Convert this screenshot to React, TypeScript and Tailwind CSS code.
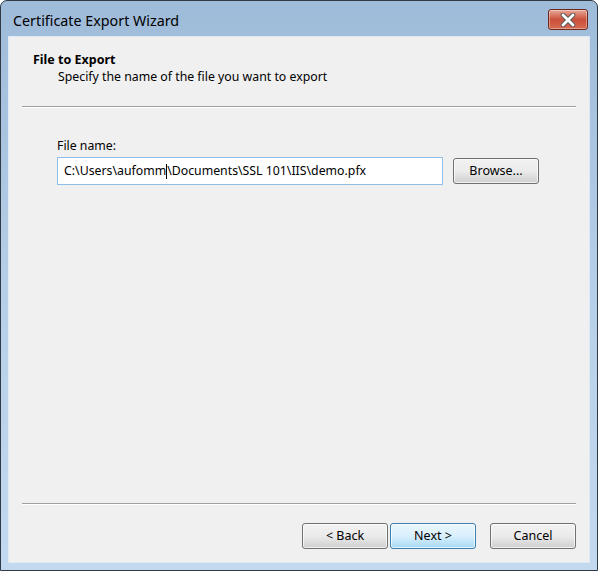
import type React from "react"

const font = { fontFamily: '"Noto Sans", "Open Sans", sans-serif' }

const WinButton: React.FC<{ label: string; primary?: boolean; className?: string }> = ({ label, primary, className }) => (
  <button
    className={
      primary
        ? `h-[26px] rounded-[3px] border border-[#3c7fb1] bg-gradient-to-b from-[#eaf6fd] via-[#d9f0fc] to-[#a7d9f5] text-[12.5px] text-black shadow-[inset_0_0_0_1px_rgba(255,255,255,0.7)] ${className ?? ""}`
        : `h-[26px] rounded-[3px] border border-[#707070] bg-gradient-to-b from-[#f2f2f2] via-[#ebebeb] to-[#cfcfcf] text-[12.5px] text-black shadow-[inset_0_0_0_1px_rgba(255,255,255,0.7)] ${className ?? ""}`
    }
  >
    {label}
  </button>
)

const CloseButton: React.FC = () => (
  <div className="w-[40px] h-[21px] rounded-[3px] border border-[#6b2a1e] bg-gradient-to-b from-[#e8a898] via-[#c9503a] to-[#d86a50] flex items-center justify-center shadow-[inset_0_0_0_1px_rgba(255,255,255,0.35)]">
    <svg width="16" height="14" viewBox="0 0 16 14">
      <path d="M3 2 L13 12 M13 2 L3 12" stroke="#5a5a5a" strokeWidth="4.6" strokeLinecap="round" />
      <path d="M3 2 L13 12 M13 2 L3 12" stroke="#ffffff" strokeWidth="2.8" strokeLinecap="round" />
    </svg>
  </div>
)

const Separator: React.FC = () => (
  <div className="mx-[13px]">
    <div className="h-px bg-[#a0a0a0]" />
    <div className="h-px bg-white" />
  </div>
)

export default function App() {
  return (
    <div className="w-[598px] h-[571px] bg-white" style={font}>
      <div className="w-full h-full rounded-t-[7px] border border-[#2f3a46] bg-gradient-to-b from-[#9ebbd9] via-[#b6cfe8] to-[#c3d9ef] flex flex-col">
        <div className="h-[35px] flex items-center justify-between pl-[12px] pr-[9px] pt-[4px]">
          <span className="text-[14.3px] text-black">Certificate Export Wizard</span>
          <div className="-mt-[2px]">
            <CloseButton />
          </div>
        </div>

        <div className="flex-1 mx-[7px] mb-[7px] border border-[#dfe9f5] bg-[#f0f0f0] flex flex-col">
          <div className="h-[69px] pt-[14px] pl-[24px]">
            <div className="text-[12.5px] font-bold text-black leading-[17px]">File to Export</div>
            <div className="text-[12.3px] text-black leading-[17px] pl-[25px]">
              Specify the name of the file you want to export
            </div>
          </div>

          <Separator />

          <div className="flex-1 pl-[48px] pt-[29px]">
            <div className="text-[12.3px] text-black leading-[17px]">File name:</div>
            <div className="mt-[3px] flex items-center gap-[10px]">
              <div className="w-[386px] h-[28px] border border-[#8fbfe8] bg-white flex items-center pl-[6px] text-[12.3px] text-black">
                <span>C:\Users\aufomm</span>
                <span className="inline-block w-px h-[15px] bg-black" />
                <span>\Documents\SSL 101\IIS\demo.pfx</span>
              </div>
              <WinButton label="Browse..." className="w-[86px]" />
            </div>
          </div>

          <Separator />

          <div className="h-[57px] pt-[18px] pr-[13px] flex justify-end">
            <WinButton label="< Back" className="w-[86px]" />
            <WinButton label="Next >" primary className="w-[86px] ml-[2px]" />
            <WinButton label="Cancel" className="w-[86px] ml-[14px]" />
          </div>
        </div>
      </div>
    </div>
  )
}
